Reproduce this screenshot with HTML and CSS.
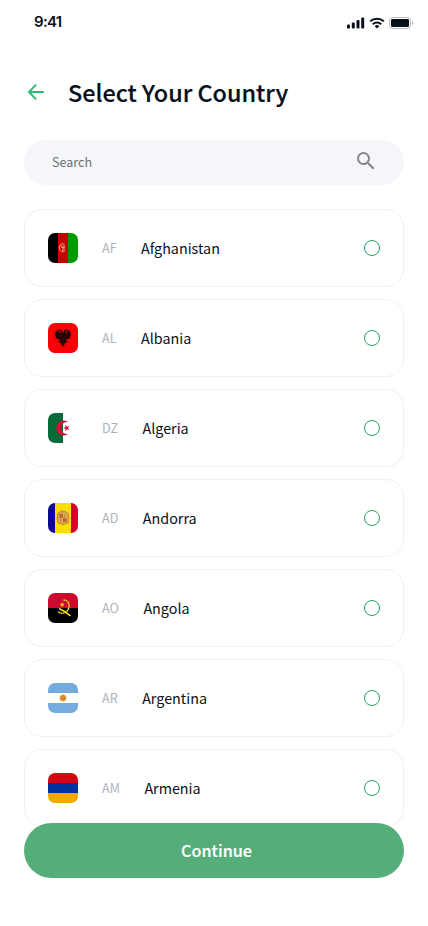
FILE: index.html
```html
<!DOCTYPE html>
<html lang="en">
<head>
<meta charset="utf-8">
<meta name="viewport" content="width=device-width, initial-scale=1">
<title>Select Your Country</title>
<link rel="stylesheet" href="styles.css">
</head>
<body>
<div class="screen">
  <div class="status">
    <span class="time">9:41</span>
    <div class="indicators">
      <svg width="18" height="12" viewBox="0 0 18 12" fill="#09101d"><rect x="0" y="7.4" width="3" height="4" rx="1"/><rect x="4.8" y="5.4" width="3" height="6" rx="1"/><rect x="9.5" y="3" width="3" height="8.4" rx="1"/><rect x="14.2" y="0.6" width="3" height="10.8" rx="1"/></svg>
      <svg width="16" height="12" viewBox="0 0 16 12" fill="none" stroke="#09101d" stroke-width="2"><path d="M1.1 4.4a10 10 0 0 1 13.8 0"/><path d="M3.8 7.2a6.1 6.1 0 0 1 8.4 0"/><path d="M8 11.4 5.7 9.2a3.3 3.3 0 0 1 4.6 0Z" fill="#09101d" stroke="none"/></svg>
      <svg width="25" height="12" viewBox="0 0 25 12"><rect x=".5" y=".5" width="21" height="11" rx="2.8" fill="none" stroke="#b9bcc1"/><rect x="2" y="2" width="18" height="8" rx="1.3" fill="#09101d"/><path d="M23 4v4c.9-.3 1.4-1.1 1.4-2S23.900 4.300 23 4" fill="#b9bcc1"/></svg>
    </div>
  </div>
  <header class="header">
    <svg class="back" width="16" height="16" viewBox="0 0 16 16" fill="none" stroke="#2fb974" stroke-width="1.9" stroke-linecap="round" stroke-linejoin="round"><path d="M15 8H1M7.600 1.200 1 8l6.600 6.800"/></svg>
    <h1>Select Your Country</h1>
  </header>
  <div class="search">
    <span>Search</span>
    <svg width="18" height="18" viewBox="3 3 18 18" fill="#85868a"><path d="M15.500 14h-.79l-.28-.27A6.471 6.471 0 0 0 16 9.500 6.500 6.500 0 1 0 9.500 16c1.610 0 3.090-.59 4.230-1.570l.27.28v.79l5 4.990L20.490 19l-4.990-5zm-6 0C7.010 14 5 11.990 5 9.500S7.010 5 9.500 5 14 7.010 14 9.500 11.990 14 9.500 14z"/></svg>
  </div>
  <div class="list">
    <div class="card">
      <svg class="flag" viewBox="0 0 30 30"><path fill="#000" d="M0 0h10v30H0z"/><path fill="#c90000" d="M10 0h10v30H10z"/><path fill="#090" d="M20 0h10v30H20z"/><g fill="none" stroke="#edae70" stroke-width="1"><path d="M16.500 11c-4-1-6 2-4.800 5.200 1 2.800 3.500 3 5 2.400"/><path d="M12 12.500l2 .8M17 12.800c-2-.5-3 .7-2.500 2.200s1.800 1.500 2.800 1M14 17.500l3-.8M13.500 14.500h3.500"/></g></svg>
      <span class="code">AF</span><span class="name">Afghanistan</span><span class="radio"></span>
    </div>
    <div class="card">
      <svg class="flag" viewBox="0 0 30 30"><path fill="#fb0007" d="M0 0h30v30H0z"/><path fill="#260404" d="M15 9.500l-1.500-2.500-2.500-.8-1 1.400 1.800.2 1.200 1.600-1.200.3-1.600-2-1.800-1.200.4 2.200-1.600-.5.800 1.900-1.500.2 1.400 1.500-1.400.7 1.600 1-.9 1.200 1.800.2-.5 1.400 1.900-.5-.2 1.300 1.700-.8.300 1.200-3 .9 2.900.7-.7 1.300 1.700-.3.500 1.800 1.400 1.800 1.400-1.800.5-1.800 1.700.3-.7-1.300 2.900-.7-3-.9.300-1.200 1.700.8-.2-1.300 1.900.5-.5-1.400 1.800-.2-.9-1.200 1.600-1-1.400-.7 1.400-1.500-1.500-.2.800-1.900-1.600.5.400-2.200-1.800 1.200-1.600 2-1.200-.3L18.200 7.800 20 7.600 19 6.200l-2.500.8z"/></svg>
      <span class="code">AL</span><span class="name">Albania</span><span class="radio"></span>
    </div>
    <div class="card">
      <svg class="flag" viewBox="0 0 30 30"><path fill="#fff" d="M0 0h30v30H0z"/><path fill="#066b36" d="M0 0h15v30H0z"/><path fill="#d21034" d="M20.500 9.200a7.500 7.500 0 1 0 0 11.600 6 6 0 1 1 0-11.600z"/><path fill="#d21034" d="M15 15l2.500-.8v-2.500l1.500 2 2.500-.8-1.500 2.100 1.500 2.100-2.500-.8-1.500 2v-2.500z"/></svg>
      <span class="code">DZ</span><span class="name">Algeria</span><span class="radio"></span>
    </div>
    <div class="card">
      <svg class="flag" viewBox="0 0 30 30"><path fill="#10069f" d="M0 0h7v30H0z"/><path fill="#fedd00" d="M7 0h16v30H7z"/><path fill="#d50032" d="M23 0h7v30h-7z"/><path d="M10 10q2.500-1 3-2h4q.5 1 3 2l1 5-1 5-3 .8-2 1.200-2-1.200-3-.8-1-5z" fill="#d8a34d" stroke="#a97a49" stroke-width=".7"/><path d="M11.500 11H15v4h-3.500zM15 15h3.500v4H15z" fill="#c75c3b"/><path d="M15 11h3.500v4H15zM11.500 15H15v4h-3.500z" fill="#e8b55b"/><path d="M13 11v8m3.800-8v8M11.500 13h7m-7 4h7" stroke="#be713f" stroke-width=".6"/></svg>
      <span class="code">AD</span><span class="name">Andorra</span><span class="radio"></span>
    </div>
    <div class="card">
      <svg class="flag" viewBox="0 0 30 30"><path fill="#cc092f" d="M0 0h30v15H0z"/><path fill="#000" d="M0 15h30v15H0z"/><g fill="none" stroke="#ffdc15"><path d="M15.500 7c3.500 0 5.800 2.500 5.600 6-.2 4-3.500 7.500-7 7.200-1.800-.1-3-.7-4.300-1.800" stroke-width="1.500" stroke-dasharray="1.800 .45"/><path d="M11 15.500q6 2.500 11.500 7.500" stroke-width="1.500"/></g><path fill="#ffcb00" d="M13.800 9l.8 1.600 1.900-.2-1.300 1.400.8 1.800-1.700-.9-1.400 1.300.2-1.900-1.700-.9 2-.4z"/></svg>
      <span class="code">AO</span><span class="name">Angola</span><span class="radio"></span>
    </div>
    <div class="card">
      <svg class="flag" viewBox="0 0 30 30"><path fill="#74acdf" d="M0 0h30v30H0z"/><path fill="#fff" d="M0 10h30v10H0z"/><circle cx="15" cy="15" r="3.200" fill="#d58a32" stroke="#f2c47c" stroke-width="1" stroke-dasharray=".7 .5"/><circle cx="15" cy="15" r="2.200" fill="#d9882c"/></svg>
      <span class="code">AR</span><span class="name">Argentina</span><span class="radio"></span>
    </div>
    <div class="card">
      <svg class="flag" viewBox="0 0 30 30"><path fill="#d90012" d="M0 0h30v10H0z"/><path fill="#0033a0" d="M0 10h30v10H0z"/><path fill="#f2a800" d="M0 20h30v10H0z"/></svg>
      <span class="code">AM</span><span class="name">Armenia</span><span class="radio"></span>
    </div>
  </div>
  <button class="continue">Continue</button>
</div>
</body>
</html>
```
FILE: styles.css
```css
* { box-sizing: border-box; }
body { margin: 0; background: #fff; color: #09101d; font-family: "Noto Sans CJK SC", "Noto Sans", sans-serif; }
svg { display: block; flex: none; }
.screen { width: 428px; height: 926px; padding: 0 24px; overflow: hidden; }
.status { height: 44px; padding: 0 0 0 10px; display: flex; align-items: center; justify-content: space-between; }
.time { font: 600 15px/20px Inter, sans-serif; letter-spacing: -.7px; }
.indicators { display: flex; gap: 4px; margin: 1px -10px 0 0; }
.header { height: 96px; display: flex; align-items: center; gap: 24px; padding: 0 0 1px 4px; }
h1 { margin: 0; font-size: 23.4px; line-height: 32px; font-weight: 500; -webkit-text-stroke: .2px #09101d; }
.search { height: 45px; border-radius: 23px; background: #f4f6f9; padding: 0 29px 4px 28px; display: flex; align-items: center; justify-content: space-between; }
.search span { font-size: 12.6px; line-height: 20px; color: #6d7078; padding-top: 3px; }
.list { margin-top: 24px; display: flex; flex-direction: column; gap: 12px; }
.card { height: 78px; border: 1px solid #f0f0f1; border-radius: 18px; padding: 0 23px; display: flex; align-items: center; }
.flag { width: 30px; height: 30px; border-radius: 7px; }
.code { margin-left: 24px; font-size: 12.6px; line-height: 20px; color: #b0b3b9; }
.name { margin-left: 24.5px; font-size: 14.33px; line-height: 24px; }
.radio { margin-left: auto; width: 16px; height: 16px; border: 1px solid #23a566; border-radius: 50%; }
.continue { display: block; position: relative; width: 100%; height: 55px; margin: -4px 0 0; padding: 0 0 2px 5px; border: 0; border-radius: 28px; background: #55ad79; color: #fff; font: 500 16.2px/24px "Noto Sans CJK SC", "Noto Sans", sans-serif; -webkit-text-stroke: .15px #fff; }
```
